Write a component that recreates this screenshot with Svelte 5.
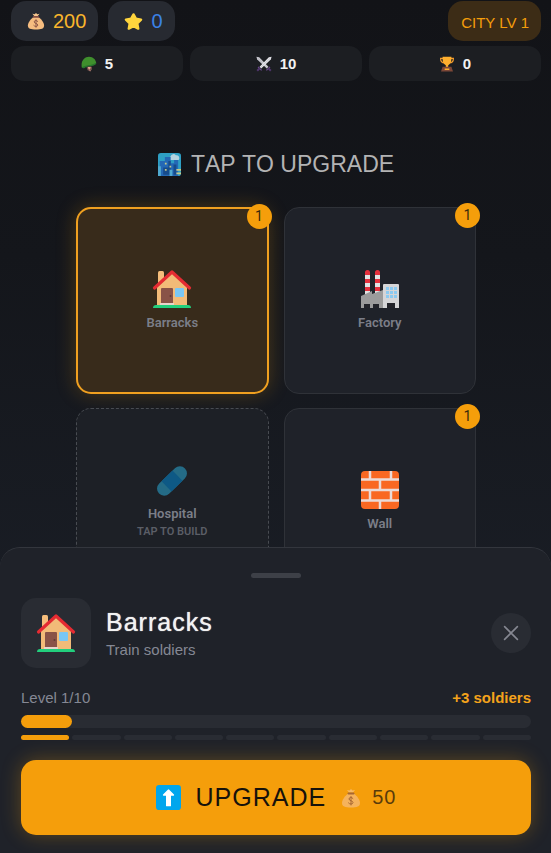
<script>
  const stats = [
    { icon: 'helmet', label: 'Soldiers', value: 5 },
    { icon: 'swords', label: 'Attack', value: 10 },
    { icon: 'trophy', label: 'Trophies', value: 0 }
  ];
  const buildings = [
    { name: 'Barracks', icon: 'house', level: 1 },
    { name: 'Factory', icon: 'factory', level: 1 },
    { name: 'Hospital', icon: 'bandage', level: 0 },
    { name: 'Wall', icon: 'bricks', level: 1 }
  ];
  const level = 1;
  const maxLevel = 10;
  let selected = $state('Barracks');
</script>

{#snippet icon(name, size)}
  <svg class="icon" width={size} height={size} viewBox="0 0 40 40" aria-hidden="true">
    {#if name === 'bag'}
      <path fill="#f6c58e" d="M16 9 12 4l5 1 3-3 3 3 5-1-4 5z" />
      <path fill="#f6bd80" d="M15 11h10c7 4 13 13 13 19 0 7-6 9-18 9S2 37 2 30c0-6 6-15 13-19z" />
      <rect x="13" y="9" width="14" height="4" rx="2" fill="#875044" />
      <path fill="none" stroke="#875044" stroke-width="2" stroke-linecap="round" d="M24 21c-2-3-8-3-8 1s8 3 8 7-7 4-9 1M20 17v17" />
    {:else if name === 'star'}
      <path fill="#ffd53d" stroke="#ffd53d" stroke-width="5" stroke-linejoin="round" d="m20 5 5 9 11 2-8 8 2 11-10-5-10 5 2-11-8-8 11-2z" />
    {:else if name === 'helmet'}
      <path fill="#e0a08b" d="M16 27h10v7l-3 5-6-5z" />
      <path fill="none" stroke="#6d4a4a" stroke-width="3" d="m15 27 3 8h6l2-8" />
      <path fill="#3f8f2d" d="M2 29C-1 12 9 2 20 2c11 0 17 8 18 15-6 8-20 6-25 9-4 3-7 4-11 3z" />
      <path fill="#28762c" d="M2 29c10-8 22-3 36-12v3C28 28 16 24 9 30c-3 1-5 1-7-1z" />
    {:else if name === 'swords'}
      <path stroke="#6f4b91" stroke-width="3" d="m5 27 9 9M35 27l-9 9" />
      <path stroke="#51366e" stroke-width="5" d="m9 31-6 6M31 31l6 6" />
      <path fill="#c9c9cf" d="m1 2 7 1 23 24-4 4L3 9z" />
      <path fill="#e6e6eb" d="m39 2-7 1L9 27l4 4L37 9z" />
      <path stroke="#9b9ba8" d="M36 5 11 29M4 5l13 13" />
    {:else if name === 'trophy'}
      <path fill="none" stroke="#f39c2d" stroke-width="3" d="M11 6H4c0 8 4 11 10 11M29 6h7c0 8-4 11-10 11" />
      <path fill="#ffb02e" d="M9 2h22c1 11-2 18-8 21v6h-6v-6C11 20 8 13 9 2z" />
      <path fill="#7d4838" d="M9 27h22l4 12H5z" />
      <rect x="14" y="31" width="12" height="4" rx="1" fill="#ffb02e" />
    {:else if name === 'city'}
      <rect width="40" height="40" rx="5" fill="#2e9fc4" />
      <path fill="#b5d3df" d="M19 12a4 4 0 0 1 3-6 5 5 0 0 1 9-2 5 5 0 0 1 5 8z" />
      <path fill="#2468b5" d="M3 14h9V7h10v11h6v-6h7v28H3z" />
      <path fill="#164b8c" d="M9 25h9V14h4v24H9zM27 20h5v18h-5z" />
      <path fill="#4fa9d0" d="M0 23h5v17H0zM20 29h5v11h-5z" />
      <path fill="#c5c98a" d="M12 17h3v3h-3zm8 5h3v3h-3zm-8 6h3v3h-3zm20 0h8v3h-8zm0 6h8v3h-8z" />
    {:else if name === 'house'}
      <path fill="#f6bd7b" d="M6 3.500q0-1.500 1.500-1.500h3q1.500 0 1.500 1.500V14H6z" />
      <path fill="#f2bb78" d="M5 18 20 4l15 14v18H5z" />
      <path fill="none" stroke="#e52b32" stroke-width="3.200" stroke-linecap="round" stroke-linejoin="round" d="M2.500 19 20 3l17.500 16" />
      <rect x="9" y="19" width="12" height="16" rx="1" fill="#895347" />
      <circle cx="18.500" cy="27" r="1" fill="#5f3934" />
      <rect x="23" y="19" width="9" height="9" rx="1" fill="#7ac7f4" />
      <rect x="8" y="34" width="14" height="2" fill="#e8d4ca" />
      <path fill="#22cf7d" d="M1 39q0-3 3-3h32q3 0 3 3z" />
    {:else if name === 'factory'}
      <path fill="#e2e2e3" d="M5 3h5v22H5zM15 3h5v22h-5z" />
      <path fill="#e52f3c" d="M5 3.500Q5 1 7.500 1T10 3.500V6H5zM15 3.500Q15 1 17.500 1T20 3.500V6h-5zM5 10h5v4H5zm10 0h5v4h-5zM5 18h5v4H5zm10 0h5v4h-5z" />
      <path fill="#9b9b9b" d="m1 27 11-5v3l11-4v18H1z" />
      <path fill="#d5d5d7" d="M23 16q0-1 1-1h14q1 0 1 1v23H23z" />
      <path fill="#8bcaf1" d="M26 18h3v3h-3zm4 0h3v3h-3zm4 0h3v3h-3zm-8 4h3v3h-3zm4 0h3v3h-3zm4 0h3v3h-3zm-8 4h3v3h-3zm4 0h3v3h-3zm4 0h3v3h-3z" />
      <path fill="#222329" d="M4 35h6v4H4zm9 0h6v4h-6zM27 34h8v5h-8z" />
    {:else if name === 'bandage'}
      <g transform="rotate(-44 20 20)">
        <rect x="1" y="12.500" width="38" height="15" rx="7.500" fill="#246b86" />
        <path fill="#0e5985" d="M12 12.500h16v15H12z" />
      </g>
    {:else if name === 'bricks'}
      <rect x="1" y="1" width="38" height="38" rx="4" fill="#f96822" />
      <path fill="none" stroke="#eadbd8" stroke-width="2.500" d="M1 9.500h38M1 20h38M1 30.500h38M10 1v8.500M31 1v8.500M20 9.500V20M10 20v10.500M31 20v10.500M20 30.500V39" />
    {:else if name === 'up'}
      <rect width="40" height="40" rx="5" fill="#00a6ed" />
      <path fill="#fff" stroke="#fff" stroke-width="2" stroke-linejoin="round" d="m20 8 8 8h-5v17h-6V16h-5z" />
    {:else if name === 'close'}
      <path fill="none" stroke="#858791" stroke-width="4" stroke-linecap="round" d="m4 4 32 32M36 4 4 36" />
    {/if}
  </svg>
{/snippet}

<div class="game">
  <header>
    <div class="resources">
      <div class="pill gold">{@render icon('bag', 18)}<span>200</span></div>
      <div class="pill gems">{@render icon('star', 19)}<span>0</span></div>
      <div class="city">CITY LV 1</div>
    </div>
    <div class="stats">
      {#each stats as stat}
        <div class="stat" title={stat.label}>{@render icon(stat.icon, 16)}<span>{stat.value}</span></div>
      {/each}
    </div>
  </header>

  <main>
    <h1>{@render icon('city', 23)}<span>TAP TO UPGRADE</span></h1>
    <div class="grid">
      {#each buildings as b}
        <button
          class="card"
          class:selected={selected === b.name}
          class:empty={b.level === 0}
          onclick={() => (selected = b.name)}
        >
          {@render icon(b.icon, b.icon === 'bandage' ? 38 : 40)}
          <span class="name">{b.name}</span>
          {#if b.level}
            <span class="badge">{b.level}</span>
          {:else}
            <span class="build">TAP TO BUILD</span>
          {/if}
        </button>
      {/each}
    </div>
  </main>

  <section class="sheet" aria-label="Building details">
    <div class="handle"></div>
    <div class="summary">
      <div class="tile">{@render icon('house', 40)}</div>
      <div class="about">
        <h2>Barracks</h2>
        <p>Train soldiers</p>
      </div>
      <button class="close" aria-label="Close">{@render icon('close', 16)}</button>
    </div>
    <div class="progress-text">
      <span>Level {level}/{maxLevel}</span>
      <strong>+3 soldiers</strong>
    </div>
    <div class="bar" role="progressbar" aria-label="Level" aria-valuenow={level} aria-valuemin="0" aria-valuemax={maxLevel}>
      <div class="fill" style:width="{(level / maxLevel) * 100}%"></div>
    </div>
    <div class="segments">
      {#each Array(maxLevel) as _, i}
        <div class:on={i < level}></div>
      {/each}
    </div>
    <button class="upgrade">
      {@render icon('up', 25)}
      <span>UPGRADE</span>
      <span class="cost">{@render icon('bag', 20)}<span>50</span></span>
    </button>
  </section>
</div>

<style>
  :global(body) {
    background: #121418;
  }
  .game {
    box-sizing: border-box;
    position: relative;
    height: 100vh;
    overflow: hidden;
    background: linear-gradient(#121317, #14161b 30%, #1a1e26 75%);
    font-family: "Liberation Sans", Arial, sans-serif;
    color: #f2f2f2;
  }
  .game :global(*) {
    box-sizing: border-box;
  }
  button {
    font-family: inherit;
    cursor: pointer;
  }
  .icon {
    display: block;
    flex: none;
  }
  header {
    padding: 1px 10px 0 11px;
  }
  .resources,
  .stats {
    display: flex;
  }
  .resources {
    gap: 10px;
  }
  .pill,
  .city {
    display: flex;
    align-items: center;
    height: 40px;
    border-radius: 15px;
    background: #272a31;
  }
  .pill {
    gap: 8px;
    padding: 0 12px 0 16px;
    font-size: 20px;
  }
  .gold {
    color: #f9b52c;
  }
  .gems {
    color: #3b82e6;
  }
  .city {
    margin-left: auto;
    padding: 3px 12px 0 13px;
    background: #3c2c16;
    color: #f59e0b;
    font-size: 15px;
  }
  .stats {
    gap: 7px;
    margin-top: 5px;
  }
  .stat {
    flex: 1;
    display: flex;
    align-items: center;
    justify-content: center;
    gap: 8px;
    height: 35px;
    border-radius: 13px;
    background: #1c1e22;
    font-size: 15px;
    font-weight: 700;
  }
  main {
    padding: 68px 20px 0 21px;
  }
  h1 {
    display: flex;
    align-items: center;
    justify-content: center;
    gap: 10px;
    margin: 0 0 28px;
    color: #b3b3b4;
    font-size: 24px;
    font-weight: 400;
    line-height: 30px;
    font-kerning: none;
  }
  h1 span {
    font-size: 23px;
  }
  .grid {
    display: grid;
    grid-template-columns: 1fr 1fr;
    grid-auto-rows: 187px;
    gap: 14px 15px;
    max-width: 400px;
    margin: 0 auto;
  }
  .card {
    position: relative;
    display: flex;
    flex-direction: column;
    align-items: center;
    justify-content: center;
    padding: 0;
    border: 1px solid #2f3238;
    border-radius: 15px;
    background: #1f2229;
    color: #7b7e88;
    font-family: Roboto, sans-serif;
  }
  .card.selected {
    border: 2px solid #f0a020;
    background: #382b1b;
    box-shadow: 0 0 20px rgba(245, 158, 11, 0.25);
  }
  .card.empty {
    border: 1px dashed #484b51;
    background: #1d2026;
  }
  .name {
    margin-top: 5px;
    font-size: 13px;
    font-weight: 600;
    line-height: 18px;
  }
  .build {
    color: #5b5e66;
    font-size: 11px;
    font-weight: 600;
    line-height: 18px;
  }
  .badge {
    position: absolute;
    top: -5px;
    right: -5px;
    width: 25px;
    border-radius: 50%;
    background: #f59e0b;
    color: #3a290c;
    font-size: 14px;
    line-height: 25px;
    text-align: center;
  }
  .sheet {
    position: absolute;
    right: 0;
    bottom: 0;
    left: 0;
    padding: 25px 20px 18px 21px;
    border-top: 1px solid #33363d;
    border-radius: 20px 20px 0 0;
    background: #1f2229;
  }
  .handle {
    width: 50px;
    height: 5px;
    margin: 0 auto 20px;
    border-radius: 3px;
    background: #3d4047;
  }
  .summary {
    display: flex;
    align-items: center;
    gap: 15px;
  }
  .tile {
    display: grid;
    place-items: center;
    width: 70px;
    height: 70px;
    border-radius: 15px;
    background: #292c33;
  }
  .about {
    flex: 1;
  }
  h2 {
    margin: 0;
    font-size: 25px;
    font-weight: 400;
    line-height: 30px;
    letter-spacing: 1px;
    text-shadow: 0 0 1px #f2f2f2;
  }
  p {
    margin: 0;
    padding-top: 4px;
    color: #858894;
    font-size: 15px;
    line-height: 18px;
  }
  .close {
    display: grid;
    place-items: center;
    width: 40px;
    height: 40px;
    padding: 0;
    border: 0;
    border-radius: 50%;
    background: #292c33;
  }
  .progress-text {
    display: flex;
    justify-content: space-between;
    margin: 21px 0 8px;
    color: #858894;
    font-size: 15px;
    line-height: 18px;
  }
  strong {
    color: #f5a31b;
  }
  .bar {
    height: 13px;
    border-radius: 7px;
    background: #292c33;
  }
  .fill {
    height: 100%;
    border-radius: 7px;
    background: #f59e0b;
  }
  .segments {
    display: flex;
    gap: 3px;
    margin: 7px 0 20px;
  }
  .segments div {
    flex: 1;
    height: 5px;
    border-radius: 3px;
    background: #292c33;
  }
  .segments .on {
    background: #f59e0b;
  }
  .upgrade {
    display: flex;
    align-items: center;
    justify-content: center;
    gap: 15px;
    width: 100%;
    height: 75px;
    border: 0;
    border-radius: 15px;
    background: #f59e0b;
    box-shadow: 0 0 20px rgba(245, 158, 11, 0.3);
    color: #16120b;
    font-size: 25px;
    letter-spacing: 1px;
  }
  .cost {
    display: flex;
    align-items: center;
    gap: 11px;
    opacity: 0.7;
    font-size: 20px;
  }
</style>
